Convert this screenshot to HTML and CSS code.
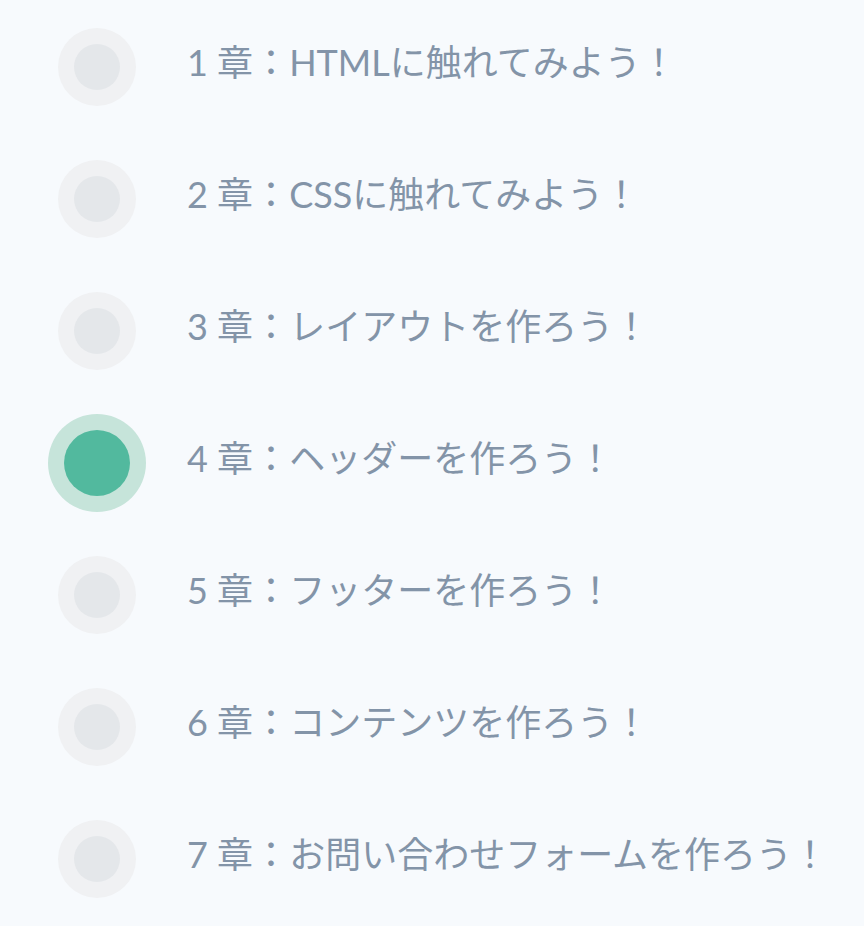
FILE: index.html
```html
<!DOCTYPE html>
<html lang="ja">
<head>
<meta charset="utf-8">
<link rel="stylesheet" href="styles.css">
</head>
<body>
<ul class="steps">
  <li class="step"><span class="dot"><span class="core"></span></span><span class="label">1 章<span class="sep">：</span>HTMLに触れてみよう！</span></li>
  <li class="step"><span class="dot"><span class="core"></span></span><span class="label">2 章<span class="sep">：</span>CSSに触れてみよう！</span></li>
  <li class="step"><span class="dot"><span class="core"></span></span><span class="label">3 章<span class="sep">：</span>レイアウトを作ろう！</span></li>
  <li class="step active"><span class="dot"><span class="core"></span></span><span class="label">4 章<span class="sep">：</span>ヘッダーを作ろう！</span></li>
  <li class="step"><span class="dot"><span class="core"></span></span><span class="label">5 章<span class="sep">：</span>フッターを作ろう！</span></li>
  <li class="step"><span class="dot"><span class="core"></span></span><span class="label">6 章<span class="sep">：</span>コンテンツを作ろう！</span></li>
  <li class="step"><span class="dot"><span class="core"></span></span><span class="label">7 章<span class="sep">：</span>お問い合わせフォームを作ろう！</span></li>
</ul>
</body>
</html>
```
FILE: styles.css
```css
html, body {
  margin: 0;
  padding: 0;
  background: #f7fafd;
  height: 100%;
}
.steps {
  list-style: none;
  margin: 0;
  padding: 1px 0 0 48px;
}
.step {
  display: flex;
  align-items: center;
  height: 132px;
}
.dot {
  width: 98px;
  height: 98px;
  flex: none;
  display: flex;
  align-items: center;
  justify-content: center;
}
.core {
  width: 78px;
  height: 78px;
  border-radius: 50%;
  background: #f0f1f3;
  display: flex;
  align-items: center;
  justify-content: center;
}
.core::after {
  content: "";
  width: 46px;
  height: 46px;
  border-radius: 50%;
  background: #e4e7ea;
}
.active .core {
  width: 98px;
  height: 98px;
  background: #c6e4da;
}
.active .core::after {
  width: 66px;
  height: 66px;
  background: #52b99e;
}
.label {
  margin-left: 41px;
  margin-bottom: 10px;
  font-family: Lato, "Noto Sans CJK JP", sans-serif;
  font-size: 36px;
  line-height: 1.2;
  color: #8394a8;
  white-space: nowrap;
}
.sep {
  font-family: "Noto Sans CJK JP", sans-serif;
}
```
